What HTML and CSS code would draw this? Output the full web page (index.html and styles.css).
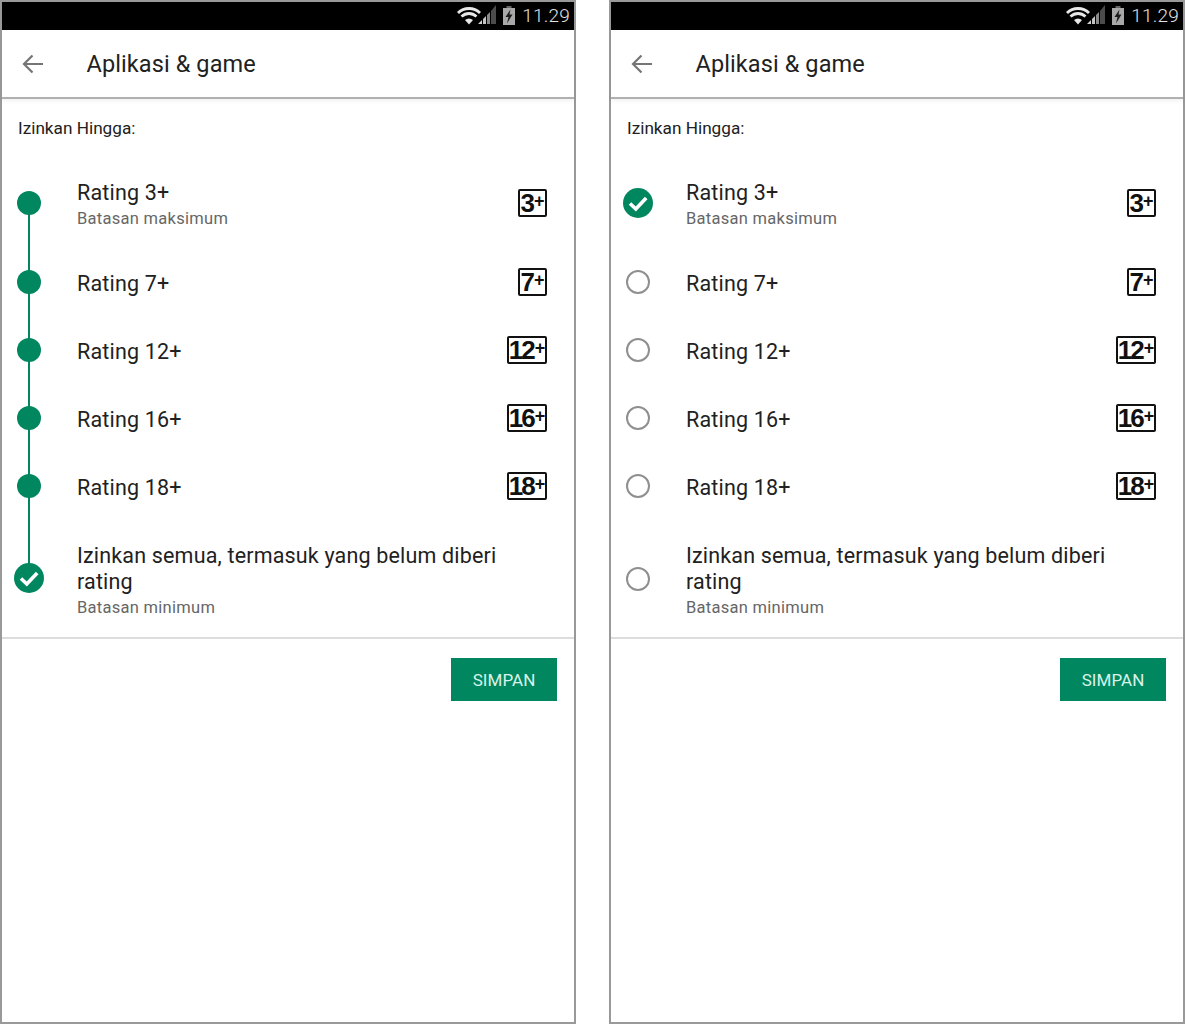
FILE: index.html
```html
<!DOCTYPE html>
<html lang="id">
<head>
    <meta charset="UTF-8">
    <meta name="viewport" content="width=device-width, initial-scale=1.0">
    <title>Aplikasi &amp; game</title>
    <link rel="stylesheet" href="styles.css">
</head>
<body>
    <svg class="icon-defs" width="0" height="0">
        <symbol id="wifi" viewBox="0 0 24 18">
            <path d="M1 6 C7 0 17 0 23 6" fill="none" stroke="#e8e8e8" stroke-width="2.800"/>
            <path d="M4.500 9.500 C9 5.500 15 5.500 19.500 9.500" fill="none" stroke="#e8e8e8" stroke-width="2.800"/>
            <path d="M8 13 C10.500 11 13.500 11 16 13 L12 17.500 Z" fill="#e8e8e8"/>
        </symbol>
        <symbol id="signal" viewBox="0 0 18 19">
            <path d="M0 19 L4 15 V19 Z" fill="#d0d0d0"/>
            <path d="M5 19 V14 L8 11 V19 Z" fill="#c4c4c4"/>
            <path d="M9 19 V10 L12 7 V19 Z" fill="#8a8a8a"/>
            <path d="M13 19 V6 L18 0 V19 Z" fill="#4c4c4c"/>
        </symbol>
        <symbol id="battery" viewBox="0 0 12 19">
            <path d="M3.500 0 H8.500 V2 H3.500 Z" fill="#666"/>
            <path d="M0 2 H12 V19 H0 Z" fill="#a8a8a8"/>
            <path d="M7.500 3.500 L2.500 11 H5.500 L4 17.500 L9.500 8.500 H6.500 Z" fill="#1c1c1c"/>
        </symbol>
        <symbol id="back" viewBox="0 0 24 24">
            <path d="M22 12 H3 M11.500 3.500 L3 12 L11.500 20.500" fill="none" stroke="#757575" stroke-width="2.200"/>
        </symbol>
        <symbol id="check" viewBox="0 0 30 30">
            <circle cx="15" cy="15" r="15" fill="#01875f"/>
            <path d="M7 15.500 L12.800 21 L23.200 10" fill="none" stroke="#fff" stroke-width="3.600"/>
        </symbol>
    </svg>

    <div class="screens">
        <!-- range mode: every level up to the limit is filled -->
        <div class="phone">
            <div class="status-bar">
                <svg class="st-wifi"><use href="#wifi"/></svg>
                <svg class="st-signal"><use href="#signal"/></svg>
                <svg class="st-battery"><use href="#battery"/></svg>
                <span class="st-time">11.29</span>
            </div>
            <div class="app-bar">
                <svg class="back-icon"><use href="#back"/></svg>
                <span class="app-title">Aplikasi &amp; game</span>
            </div>
            <p class="allow-label">Izinkan Hingga:</p>
            <ul class="rating-list stepper">
                <li class="rating-row tall">
                    <span class="marker"><span class="dot"></span></span>
                    <div class="rating-text">
                        <div class="rating-name">Rating 3+</div>
                        <div class="rating-note">Batasan maksimum</div>
                    </div>
                    <span class="badge">3<span class="plus">+</span></span>
                </li>
                <li class="rating-row">
                    <span class="marker"><span class="dot"></span></span>
                    <div class="rating-text"><div class="rating-name">Rating 7+</div></div>
                    <span class="badge">7<span class="plus">+</span></span>
                </li>
                <li class="rating-row">
                    <span class="marker"><span class="dot"></span></span>
                    <div class="rating-text"><div class="rating-name">Rating 12+</div></div>
                    <span class="badge wide">12<span class="plus">+</span></span>
                </li>
                <li class="rating-row">
                    <span class="marker"><span class="dot"></span></span>
                    <div class="rating-text"><div class="rating-name">Rating 16+</div></div>
                    <span class="badge wide">16<span class="plus">+</span></span>
                </li>
                <li class="rating-row">
                    <span class="marker"><span class="dot"></span></span>
                    <div class="rating-text"><div class="rating-name">Rating 18+</div></div>
                    <span class="badge wide">18<span class="plus">+</span></span>
                </li>
                <li class="rating-row last">
                    <span class="marker"><svg class="check-icon"><use href="#check"/></svg></span>
                    <div class="rating-text">
                        <div class="rating-name">Izinkan semua, termasuk yang belum diberi rating</div>
                        <div class="rating-note">Batasan minimum</div>
                    </div>
                </li>
            </ul>
            <div class="actions"><button class="save-button">SIMPAN</button></div>
        </div>

        <!-- radio mode: only the selected level is ticked -->
        <div class="phone">
            <div class="status-bar">
                <svg class="st-wifi"><use href="#wifi"/></svg>
                <svg class="st-signal"><use href="#signal"/></svg>
                <svg class="st-battery"><use href="#battery"/></svg>
                <span class="st-time">11.29</span>
            </div>
            <div class="app-bar">
                <svg class="back-icon"><use href="#back"/></svg>
                <span class="app-title">Aplikasi &amp; game</span>
            </div>
            <p class="allow-label">Izinkan Hingga:</p>
            <ul class="rating-list">
                <li class="rating-row tall">
                    <span class="marker"><svg class="check-icon"><use href="#check"/></svg></span>
                    <div class="rating-text">
                        <div class="rating-name">Rating 3+</div>
                        <div class="rating-note">Batasan maksimum</div>
                    </div>
                    <span class="badge">3<span class="plus">+</span></span>
                </li>
                <li class="rating-row">
                    <span class="marker"><span class="radio"></span></span>
                    <div class="rating-text"><div class="rating-name">Rating 7+</div></div>
                    <span class="badge">7<span class="plus">+</span></span>
                </li>
                <li class="rating-row">
                    <span class="marker"><span class="radio"></span></span>
                    <div class="rating-text"><div class="rating-name">Rating 12+</div></div>
                    <span class="badge wide">12<span class="plus">+</span></span>
                </li>
                <li class="rating-row">
                    <span class="marker"><span class="radio"></span></span>
                    <div class="rating-text"><div class="rating-name">Rating 16+</div></div>
                    <span class="badge wide">16<span class="plus">+</span></span>
                </li>
                <li class="rating-row">
                    <span class="marker"><span class="radio"></span></span>
                    <div class="rating-text"><div class="rating-name">Rating 18+</div></div>
                    <span class="badge wide">18<span class="plus">+</span></span>
                </li>
                <li class="rating-row last">
                    <span class="marker"><span class="radio"></span></span>
                    <div class="rating-text">
                        <div class="rating-name">Izinkan semua, termasuk yang belum diberi rating</div>
                        <div class="rating-note">Batasan minimum</div>
                    </div>
                </li>
            </ul>
            <div class="actions"><button class="save-button">SIMPAN</button></div>
        </div>
    </div>
</body>
</html>
```

FILE: styles.css
```css
body {
    margin: 0;
    background: white;
    font-family: Roboto, "Liberation Sans", sans-serif;
    color: #212121;
}
.icon-defs {
    position: absolute;
}
.screens {
    display: flex;
    justify-content: space-between;
    height: 1024px;
}
.phone {
    width: 576px;
    box-sizing: border-box;
    border: 2px solid #999;
    background: white;
}
.status-bar {
    height: 28px;
    background: black;
    display: flex;
    align-items: flex-start;
    padding-right: 4px;
    justify-content: flex-end;
}
.st-wifi {
    width: 24px;
    height: 18px;
    margin-top: 5px;
}
.st-signal {
    width: 18px;
    height: 19px;
    margin: 3px 0 0 -3px;
}
.st-battery {
    width: 12px;
    height: 19px;
    margin: 4px 0 0 7px;
}
.st-time {
    margin: 2px 0 0 7px;
    font-size: 19px;
    line-height: 24px;
    font-weight: 300;
    letter-spacing: 0.2px;
    color: #e0e0e0;
}
.app-bar {
    height: 69px;
    box-sizing: border-box;
    border-bottom: 2px solid #b0b0b0;
    box-shadow: 0 2px 4px rgba(0,0,0,0.06);
    display: flex;
    align-items: center;
    padding-left: 19px;
}
.back-icon {
    width: 24px;
    height: 24px;
    margin-top: 1px;
}
.app-title {
    margin-left: 41.500px;
    margin-top: 1px;
    font-size: 23.500px;
    letter-spacing: 0.1px;
}
.allow-label {
    margin: 0;
    height: 60px;
    padding: 19px 0 0 16px;
    box-sizing: border-box;
    font-size: 17.200px;
    line-height: 21px;
}
.rating-list {
    list-style: none;
    margin: 0;
    padding: 0;
    border-bottom: 2px solid #ddd;
}
.rating-row {
    height: 68px;
    display: flex;
    align-items: center;
    position: relative;
    padding-right: 27px;
}
.rating-row.tall {
    height: 90px;
}
.rating-row.last {
    height: 116px;
}
.marker {
    flex: none;
    display: flex;
    justify-content: center;
    width: 36px;
    margin: -2px 30px 0 9px;
}
.rating-list:not(.stepper) .last .marker {
    margin-top: 0;
}
.dot {
    width: 24px;
    height: 24px;
    border-radius: 50%;
    background: #01875f;
}
.radio {
    width: 24px;
    height: 24px;
    box-sizing: border-box;
    border-radius: 50%;
    border: 2px solid #8f8f8f;
}
.check-icon {
    width: 30px;
    height: 30px;
}
/* connector between two steps, drawn over the rows */
.stepper .rating-row::after {
    content: "";
    position: absolute;
    left: 26px;
    width: 2px;
    background: #01875f;
    top: 50%;
    height: 68px;
}
.stepper .rating-row.tall::after {
    height: 80px;
}
.stepper .rating-row:nth-child(5)::after {
    height: 92px;
}
.stepper .rating-row.last::after {
    display: none;
}
.rating-text {
    flex: 1;
    padding: 2px 40px 0 0;
}
.rating-row.last .rating-text {
    padding-top: 4px;
}
.rating-name {
    font-size: 21.500px;
    line-height: 26px;
    letter-spacing: 0.17px;
}
.rating-note {
    margin-top: 2px;
    font-size: 16.500px;
    line-height: 22px;
    color: #666;
    letter-spacing: 0.28px;
}
.badge {
    width: 29px;
    height: 28px;
    box-sizing: border-box;
    border: 2px solid #111;
    border-radius: 2px;
    margin-top: -2px;
    display: flex;
    justify-content: center;
    align-items: center;
    font-family: "Liberation Sans", Arial, sans-serif;
    font-weight: bold;
    font-size: 26px;
    letter-spacing: -2px;
    color: #111;
}
.badge .plus {
    font-size: 18px;
    letter-spacing: 0;
    margin: -3px 0 0 1px;
}
.badge.wide {
    width: 40px;
}
.actions {
    display: flex;
    justify-content: flex-end;
    padding: 19px 17px 0 0;
}
.save-button {
    width: 106px;
    height: 43px;
    border: none;
    background: #01875f;
    color: #d8f3ea;
    font-family: Roboto, "Liberation Sans", sans-serif;
    font-size: 17px;
    letter-spacing: 0.05px;
    cursor: pointer;
}
```
